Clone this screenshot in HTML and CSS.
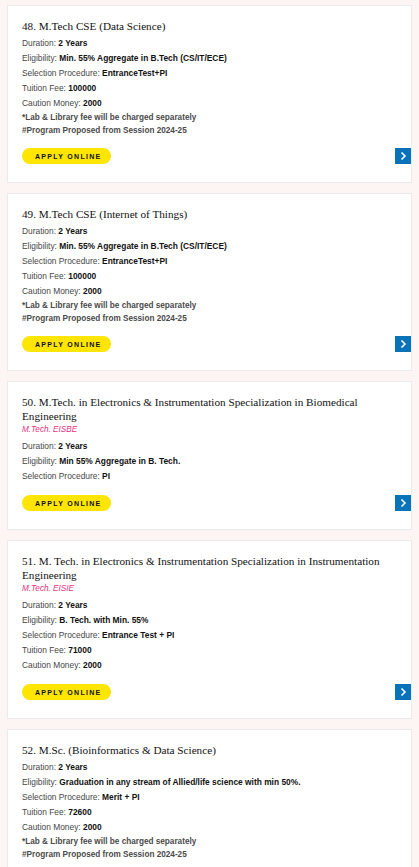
FILE: index.html
```html
<!DOCTYPE html>
<html>
<head>
<meta charset="utf-8">
<link rel="stylesheet" href="styles.css">
</head>
<body>
<div class="list">
  <div class="card">
    <h3 class="title">48. M.Tech CSE (Data Science)</h3>
    <ul class="fields">
      <li>Duration: <b>2 Years</b></li>
      <li>Eligibility: <b>Min. 55% Aggregate in B.Tech (CS/IT/ECE)</b></li>
      <li>Selection Procedure: <b>EntranceTest+PI</b></li>
      <li>Tuition Fee: <b>100000</b></li>
      <li>Caution Money: <b>2000</b></li>
    </ul>
    <p class="notes">*Lab &amp; Library fee will be charged separately<br>#Program Proposed from Session 2024-25</p>
    <div class="actions">
      <a class="apply">APPLY ONLINE</a>
      <a class="arrow"><svg viewBox="0 0 16 16" width="16" height="16"><polyline points="6.5,4.5 10,8 6.5,11.5" fill="none" stroke="#fff" stroke-width="1.6"/></svg></a>
    </div>
  </div>

  <div class="card">
    <h3 class="title">49. M.Tech CSE (Internet of Things)</h3>
    <ul class="fields">
      <li>Duration: <b>2 Years</b></li>
      <li>Eligibility: <b>Min. 55% Aggregate in B.Tech (CS/IT/ECE)</b></li>
      <li>Selection Procedure: <b>EntranceTest+PI</b></li>
      <li>Tuition Fee: <b>100000</b></li>
      <li>Caution Money: <b>2000</b></li>
    </ul>
    <p class="notes">*Lab &amp; Library fee will be charged separately<br>#Program Proposed from Session 2024-25</p>
    <div class="actions">
      <a class="apply">APPLY ONLINE</a>
      <a class="arrow"><svg viewBox="0 0 16 16" width="16" height="16"><polyline points="6.5,4.5 10,8 6.5,11.5" fill="none" stroke="#fff" stroke-width="1.6"/></svg></a>
    </div>
  </div>

  <div class="card">
    <h3 class="title">50. M.Tech. in Electronics &amp; Instrumentation Specialization in Biomedical Engineering</h3>
    <p class="sub">M.Tech. EISBE</p>
    <ul class="fields">
      <li>Duration: <b>2 Years</b></li>
      <li>Eligibility: <b>Min 55% Aggregate in B. Tech.</b></li>
      <li>Selection Procedure: <b>PI</b></li>
    </ul>
    <div class="actions">
      <a class="apply">APPLY ONLINE</a>
      <a class="arrow"><svg viewBox="0 0 16 16" width="16" height="16"><polyline points="6.5,4.5 10,8 6.5,11.5" fill="none" stroke="#fff" stroke-width="1.6"/></svg></a>
    </div>
  </div>

  <div class="card">
    <h3 class="title">51. M. Tech. in Electronics &amp; Instrumentation Specialization in Instrumentation Engineering</h3>
    <p class="sub">M.Tech. EISIE</p>
    <ul class="fields">
      <li>Duration: <b>2 Years</b></li>
      <li>Eligibility: <b>B. Tech. with Min. 55%</b></li>
      <li>Selection Procedure: <b>Entrance Test + PI</b></li>
      <li>Tuition Fee: <b>71000</b></li>
      <li>Caution Money: <b>2000</b></li>
    </ul>
    <div class="actions">
      <a class="apply">APPLY ONLINE</a>
      <a class="arrow"><svg viewBox="0 0 16 16" width="16" height="16"><polyline points="6.5,4.5 10,8 6.5,11.5" fill="none" stroke="#fff" stroke-width="1.6"/></svg></a>
    </div>
  </div>

  <div class="card">
    <h3 class="title">52. M.Sc. (Bioinformatics &amp; Data Science)</h3>
    <ul class="fields">
      <li>Duration: <b>2 Years</b></li>
      <li>Eligibility: <b>Graduation in any stream of Allied/life science with min 50%.</b></li>
      <li>Selection Procedure: <b>Merit + PI</b></li>
      <li>Tuition Fee: <b>72600</b></li>
      <li>Caution Money: <b>2000</b></li>
    </ul>
    <p class="notes">*Lab &amp; Library fee will be charged separately<br>#Program Proposed from Session 2024-25</p>
    <div class="actions">
      <a class="apply">APPLY ONLINE</a>
      <a class="arrow"><svg viewBox="0 0 16 16" width="16" height="16"><polyline points="6.5,4.5 10,8 6.5,11.5" fill="none" stroke="#fff" stroke-width="1.6"/></svg></a>
    </div>
  </div>
</div>
</body>
</html>
```

FILE: styles.css
```css
html, body {
  margin: 0;
  padding: 0;
  background: #fdf4f4;
}
body {
  font-family: "Liberation Sans", Arial, sans-serif;
  color: #222;
}
.list {
  padding: 5px 7px;
  display: flex;
  flex-direction: column;
  gap: 10px;
}
.card {
  background: #fff;
  border: 1px solid #eaeaea;
  padding: 13px 0 18px 14px;
}
.title {
  margin: 0;
  padding-right: 14px;
  font-family: "Liberation Serif", "Times New Roman", serif;
  font-weight: normal;
  font-size: 11.2px;
  line-height: 14px;
  color: #111;
}
.sub {
  margin: 0;
  font-size: 8.2px;
  line-height: 13px;
  font-style: italic;
  color: #e8327c;
}
.fields {
  list-style: none;
  margin: 3px 0 0;
  padding: 0;
}
.fields li {
  font-size: 8.4px;
  line-height: 15px;
  color: #474747;
}
.fields b {
  color: #111;
}
.notes {
  margin: 0;
  font-size: 8.2px;
  line-height: 13px;
  color: #4a4a4a;
  font-weight: bold;
}
.actions {
  margin-top: 11px;
  display: flex;
  justify-content: space-between;
  align-items: center;
}
.apply {
  display: inline-flex;
  align-items: center;
  width: 89px;
  height: 16px;
  box-sizing: border-box;
  padding-left: 13px;
  border-radius: 8px;
  background: #ffe500;
  color: #111;
  font-size: 7px;
  font-weight: bold;
  letter-spacing: 1.3px;
}
.arrow {
  display: block;
  width: 16px;
  height: 16px;
  background: #0873b9;
}
.arrow svg {
  display: block;
}
```
